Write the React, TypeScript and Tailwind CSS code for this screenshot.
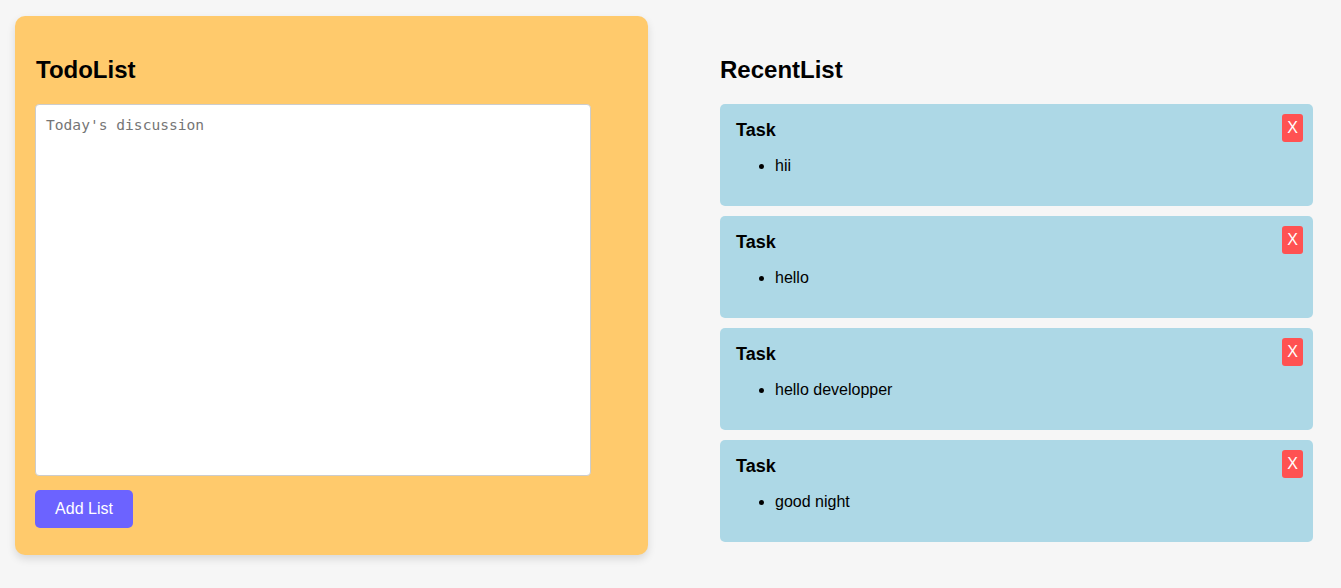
import { useState } from "react";

const tasks = ["hii", "hello", "hello developper", "good night"];

export default function App() {
  const [items, setItems] = useState(tasks);
  const [text, setText] = useState("");

  return (
    <div className="min-h-[588px] bg-[#f6f6f6] pt-[16px] pl-[15px] font-['Liberation_Sans',Arial,sans-serif] text-black">
      <div className="flex items-start">
        <section className="w-[633px] rounded-[10px] bg-[#ffca6c] px-[20px] pt-[40px] pb-[27px] shadow-[0_4px_8px_rgba(0,0,0,0.12)]">
          <h2 className="pl-[1px] text-[24px] font-bold leading-[28px]">TodoList</h2>
          <textarea
            value={text}
            onChange={(e) => setText(e.target.value)}
            placeholder="Today's discussion"
            className="mt-[20px] block h-[372px] w-[556px] resize-none rounded-[4px] border border-[#cccccc] bg-white px-[10px] pt-[11px] font-['DejaVu_Sans_Mono',monospace] text-[14.6px] leading-[18px] outline-none placeholder:text-[#757575]"
          />
          <button
            onClick={() => {
              if (text.trim()) setItems([...items, text.trim()]);
              setText("");
            }}
            className="mt-[14px] h-[38px] w-[98px] rounded-[5px] bg-[#6c63ff] text-[16px] text-white"
          >
            Add List
          </button>
        </section>

        <section className="ml-[72px] w-[593px] pt-[40px]">
          <h2 className="text-[24px] font-bold leading-[28px]">RecentList</h2>
          <div className="mt-[20px] flex flex-col gap-[10px]">
            {items.map((item, i) => (
              <div key={i} className="relative rounded-[5px] bg-[#add8e6] pt-[16px] pb-[31px] pl-[16px]">
                <h3 className="text-[18px] font-bold leading-[21px]">Task</h3>
                <ul className="mt-[15px] list-disc pl-[39px]">
                  <li className="text-[16px] leading-[19px]">{item}</li>
                </ul>
                <button
                  onClick={() => setItems(items.filter((_, j) => j !== i))}
                  className="absolute top-[10px] right-[10px] h-[28px] w-[21px] rounded-[3px] bg-[#ff5252] text-[16px] leading-[28px] text-white"
                >
                  X
                </button>
              </div>
            ))}
          </div>
        </section>
      </div>
    </div>
  );
}
